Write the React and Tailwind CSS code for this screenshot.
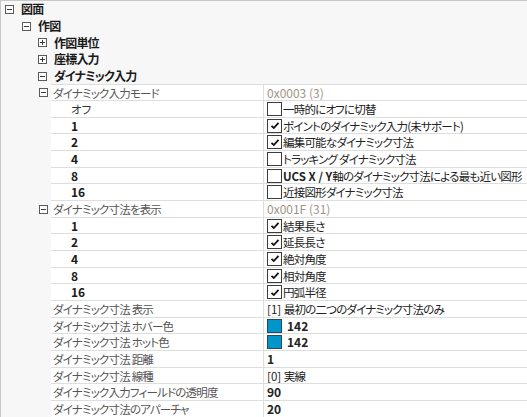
import React from "react";

const font = "font-['Meiryo_UI','Noto_Sans_CJK_JP',sans-serif] [font-feature-settings:'palt']";
const jp = "tracking-[-0.8px]";

function Toggle({ open }) {
  return (
    <svg width="9" height="9" viewBox="0 0 9 9" className="shrink-0">
      <rect x="0.5" y="0.5" width="8" height="8" fill="white" stroke="#5a5a5a" />
      <line x1="2" y1="4.5" x2="7" y2="4.5" stroke="#3a3a3a" />
      {!open && <line x1="4.5" y1="2" x2="4.5" y2="7" stroke="#3a3a3a" />}
    </svg>
  );
}

function CategoryRow({ pad, open, label }) {
  return (
    <div className="flex h-[16.68px] items-center gap-[7px]" style={{ paddingLeft: pad }}>
      <Toggle open={open} />
      <span className={"text-[12px] font-bold leading-[14px] text-[#1a1a1a] " + jp}>{label}</span>
    </div>
  );
}

function Check({ checked }) {
  return (
    <span className="flex h-[14px] w-[15px] shrink-0 items-center justify-center border border-[#3c3c3c] bg-white">
      {checked && (
        <svg width="10" height="9" viewBox="0 0 10 9">
          <path d="M1.5 4.8 L3.8 7 L8.5 1.8" fill="none" stroke="#111" strokeWidth="1.8" />
        </svg>
      )}
    </span>
  );
}

function PropRow({ label, indent, toggle, labelClass, children, first }) {
  return (
    <div className="flex h-[16.68px]">
      <div className="flex w-[50px] shrink-0 items-center justify-end pr-[3px]">
        {toggle && <Toggle open />}
      </div>
      <div
        className={
          "flex min-w-0 flex-1 border-b border-[#dedede] bg-white " + (first ? "border-t" : "")
        }
      >
        <div
          className={
            "flex w-[213px] shrink-0 items-center whitespace-nowrap border-r border-[#dedede] text-[11.5px] leading-[14px] " +
            (indent ? "pl-[20px] " : "pl-[2px] ") +
            (labelClass || "text-[#555] " + jp)
          }
        >
          {label}
        </div>
        <div className="flex min-w-0 flex-1 items-center gap-[1px] whitespace-nowrap pl-[3px] text-[11.5px] leading-[14px] text-[#222]">
          {children}
        </div>
      </div>
    </div>
  );
}

export default function App() {
  const modeItems = [
    ["オフ", false, "一時的にオフに切替", "font-normal text-[#333]"],
    ["1", true, "ポイントのダイナミック入力(未サポート)"],
    ["2", true, "編集可能なダイナミック寸法"],
    ["4", false, "トラッキング ダイナミック寸法"],
    ["8", false, null],
    ["16", false, "近接図形ダイナミック寸法"],
  ];
  const dimItems = [
    ["1", "結果長さ"],
    ["2", "延長長さ"],
    ["4", "絶対角度"],
    ["8", "相対角度"],
    ["16", "円弧半径"],
  ];

  return (
    <div className={"h-[417px] w-full overflow-hidden border-l border-t border-[#c8c8c8] bg-[#f7f7f7] " + font}>
      <CategoryRow pad={4} open label="図面" />
      <CategoryRow pad={21} open label="作図" />
      <CategoryRow pad={37} label="作図単位" />
      <CategoryRow pad={37} label="座標入力" />
      <CategoryRow pad={37} open label="ダイナミック入力" />

      <PropRow first toggle label="ダイナミック入力モード">
        <span className="text-[12px] text-[#a09486]">0x0003 (3)</span>
      </PropRow>
      {modeItems.map(([k, checked, text, cls]) => (
        <PropRow key={k} indent label={k} labelClass={cls || "text-[12px] font-semibold text-[#1a1a1a]"}>
          <Check checked={checked} />
          {text ? (
            <span className={jp}>{text}</span>
          ) : (
            <span>
              <b className="font-bold">UCS X / Y</b>
              <span className={jp}>軸のダイナミック寸法による最も近い図形</span>
            </span>
          )}
        </PropRow>
      ))}

      <PropRow toggle label="ダイナミック寸法を表示">
        <span className="text-[12px] text-[#a09486]">0x001F (31)</span>
      </PropRow>
      {dimItems.map(([k, text]) => (
        <PropRow key={k} indent label={k} labelClass="text-[12px] font-semibold text-[#1a1a1a]">
          <Check checked />
          <span className={jp}>{text}</span>
        </PropRow>
      ))}

      <PropRow label={<>ダイナミック寸法&nbsp;表示</>}>
        <span>
          [1] <span className={jp}>最初の二つのダイナミック寸法のみ</span>
        </span>
      </PropRow>
      <PropRow label={<>ダイナミック寸法&nbsp;ホバー色</>}>
        <span className="mr-[4px] h-[14px] w-[15px] border border-[#2a4a5a] bg-[#0096cc]" />
        <span className="text-[12px] font-semibold">142</span>
      </PropRow>
      <PropRow label={<>ダイナミック寸法&nbsp;ホット色</>}>
        <span className="mr-[4px] h-[14px] w-[15px] border border-[#2a4a5a] bg-[#0096cc]" />
        <span className="text-[12px] font-semibold">142</span>
      </PropRow>
      <PropRow label={<>ダイナミック寸法&nbsp;距離</>}>
        <span className="text-[12px] font-semibold">1</span>
      </PropRow>
      <PropRow label={<>ダイナミック寸法&nbsp;線種</>}>
        <span>
          [0] <span className={jp}>実線</span>
        </span>
      </PropRow>
      <PropRow label="ダイナミック入力フィールドの透明度">
        <span className="text-[12px] font-semibold">90</span>
      </PropRow>
      <PropRow label="ダイナミック寸法のアパーチャ">
        <span className="text-[12px] font-semibold">20</span>
      </PropRow>
    </div>
  );
}
